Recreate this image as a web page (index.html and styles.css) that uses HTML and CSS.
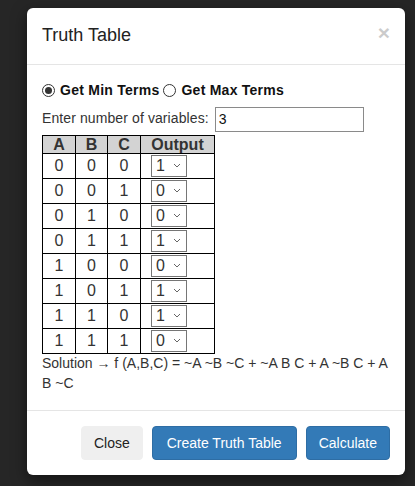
FILE: index.html
```html
<!DOCTYPE html>
<html>
<head>
<meta charset="utf-8">
<title>Truth Table</title>
<link rel="stylesheet" href="styles.css">
</head>
<body>
<div class="modal">
  <div class="modal-header">
    <h4 class="modal-title">Truth Table</h4>
    <span class="close">&times;</span>
  </div>
  <div class="modal-body">
    <div class="terms">
      <span class="radio checked"></span>
      <span class="term">Get Min Terms</span>
      <span class="radio second"></span>
      <span class="term">Get Max Terms</span>
    </div>
    <div class="vars">
      <span class="vars-label">Enter number of variables:</span>
      <span class="input">3</span>
    </div>
    <table class="tt">
      <colgroup><col class="c1"><col class="c2"><col class="c3"><col class="c4"></colgroup>
      <thead>
        <tr><th>A</th><th>B</th><th>C</th><th>Output</th></tr>
      </thead>
      <tbody>
        <tr><td>0</td><td>0</td><td>0</td><td class="out"><span class="sel"><span class="val">1</span><svg class="chev" width="8" height="5" viewBox="0 0 8 5"><path d="M1 1 L4 4 L7 1"/></svg></span></td></tr>
        <tr><td>0</td><td>0</td><td>1</td><td class="out"><span class="sel"><span class="val">0</span><svg class="chev" width="8" height="5" viewBox="0 0 8 5"><path d="M1 1 L4 4 L7 1"/></svg></span></td></tr>
        <tr><td>0</td><td>1</td><td>0</td><td class="out"><span class="sel"><span class="val">0</span><svg class="chev" width="8" height="5" viewBox="0 0 8 5"><path d="M1 1 L4 4 L7 1"/></svg></span></td></tr>
        <tr><td>0</td><td>1</td><td>1</td><td class="out"><span class="sel"><span class="val">1</span><svg class="chev" width="8" height="5" viewBox="0 0 8 5"><path d="M1 1 L4 4 L7 1"/></svg></span></td></tr>
        <tr><td>1</td><td>0</td><td>0</td><td class="out"><span class="sel"><span class="val">0</span><svg class="chev" width="8" height="5" viewBox="0 0 8 5"><path d="M1 1 L4 4 L7 1"/></svg></span></td></tr>
        <tr><td>1</td><td>0</td><td>1</td><td class="out"><span class="sel"><span class="val">1</span><svg class="chev" width="8" height="5" viewBox="0 0 8 5"><path d="M1 1 L4 4 L7 1"/></svg></span></td></tr>
        <tr><td>1</td><td>1</td><td>0</td><td class="out"><span class="sel"><span class="val">1</span><svg class="chev" width="8" height="5" viewBox="0 0 8 5"><path d="M1 1 L4 4 L7 1"/></svg></span></td></tr>
        <tr><td>1</td><td>1</td><td>1</td><td class="out"><span class="sel"><span class="val">0</span><svg class="chev" width="8" height="5" viewBox="0 0 8 5"><path d="M1 1 L4 4 L7 1"/></svg></span></td></tr>
      </tbody>
    </table>
    <p class="solution">Solution &rarr; f (A,B,C) = ~A ~B ~C + ~A B C + A ~B C + A B ~C</p>
  </div>
  <div class="modal-footer">
    <button class="btn btn-default">Close</button>
    <button class="btn btn-primary btn-wide">Create Truth Table</button>
    <button class="btn btn-primary">Calculate</button>
  </div>
</div>
</body>
</html>
```
FILE: styles.css
```css
* { box-sizing: border-box; }
html, body { margin: 0; }
body {
  background: #262626;
  font-family: "Liberation Sans", Arial, sans-serif;
  font-size: 14px;
  line-height: 1.42857;
  color: #333;
  padding: 8px 0 0 27px;
  height: 486px;
  overflow: hidden;
}
.modal {
  width: 378px;
  background: #fff;
  border-radius: 6px;
  box-shadow: 0 5px 15px rgba(0,0,0,.5);
}
.modal-header {
  display: flex;
  justify-content: space-between;
  align-items: flex-start;
  padding: 15px;
  border-bottom: 1px solid #e5e5e5;
}
.modal-title {
  margin: 0;
  font-size: 18px;
  font-weight: 500;
  line-height: 1.42857;
  color: #222;
}
.close {
  font-size: 21px;
  font-weight: bold;
  line-height: 1;
  color: #000;
  opacity: .2;
  margin-top: -1px;
}
.modal-body {
  padding: 15px 15px 15px;
}
.terms {
  display: flex;
  align-items: center;
  height: 20px;
  margin-top: 1px;
  font-weight: bold;
  color: #111;
}
.term { letter-spacing: 0.25px; }
.radio {
  width: 13px;
  height: 13px;
  border: 1px solid #333;
  border-radius: 50%;
  margin-right: 5px;
  display: flex;
  align-items: center;
  justify-content: center;
  flex: none;
}
.radio.checked::after {
  content: "";
  width: 7px;
  height: 7px;
  border-radius: 50%;
  background: #333;
}
.radio.second { margin-left: 4px; }
.vars {
  display: flex;
  align-items: center;
  margin-top: 6px;
  height: 25px;
}
.vars-label { margin-right: 6px; letter-spacing: 0.1px; }
.input {
  width: 149px;
  height: 25px;
  border: 1px solid #8a8a8a;
  padding: 0 3px;
  font-size: 14px;
  line-height: 23px;
  color: #111;
}
.tt {
  margin-top: 3px;
  border-collapse: collapse;
  table-layout: fixed;
  width: 172px;
  font-size: 16px;
}
.c1 { width: 33px; }
.c2 { width: 32px; }
.c3 { width: 33px; }
.c4 { width: 74px; }
.tt th, .tt td {
  border: 1px solid #000;
}
.tt th {
  background: #d3d3d3;
  font-weight: bold;
  line-height: 17px;
  padding: 0;
  text-align: center;
  color: #333;
}
.tt td {
  padding: 1px 0;
  text-align: center;
  vertical-align: middle;
  line-height: 22px;
}
.tt td.out {
  text-align: left;
  padding-left: 10px;
}
.sel {
  display: flex;
  align-items: center;
  width: 36px;
  height: 22px;
  border: 1px solid #767676;
  padding-left: 4px;
  font-size: 16px;
  line-height: 20px;
}
.chev {
  margin-left: auto;
  margin-right: 5px;
  fill: none;
  stroke: #666;
  stroke-width: 1;
}
.solution {
  margin: 0;
  padding-bottom: 1px;
}
.modal-footer {
  display: flex;
  justify-content: flex-end;
  gap: 9px;
  padding: 15px;
  border-top: 1px solid #e5e5e5;
}
.btn {
  font-family: inherit;
  font-size: 14px;
  line-height: 20px;
  padding: 6px 12px;
  border-radius: 4px;
  border: 1px solid transparent;
  height: 34px;
}
.btn-wide { padding: 6px 14px; }
.btn-default {
  background: #efefef;
  border-color: #efefef;
  color: #222;
}
.btn-primary {
  background: #337ab7;
  border-color: #2e6da4;
  color: #fff;
}
```
